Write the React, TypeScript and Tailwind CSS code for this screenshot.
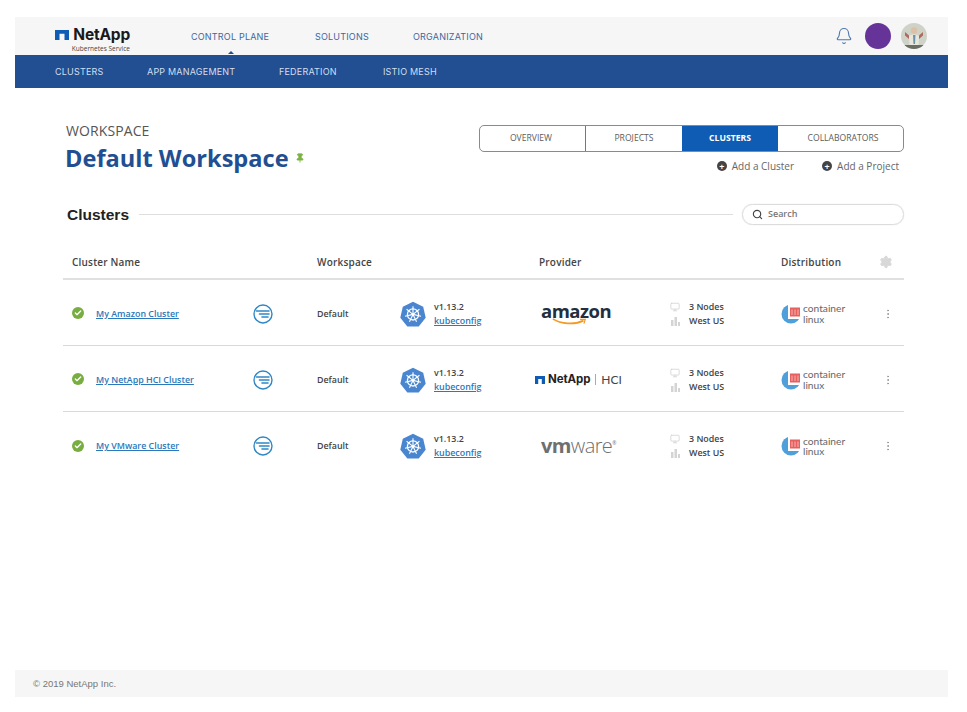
import { Bell, Search, Settings, Check, Monitor, Pin, MoreVertical } from 'lucide-react';

const openSans = 'font-["Open_Sans",sans-serif]';

const topLinks = [
  { label: 'CONTROL PLANE', width: 'w-[124px]', active: true },
  { label: 'SOLUTIONS', width: 'w-[98px]', active: false },
  { label: 'ORGANIZATION', width: 'w-[100px]', active: false },
];

const subLinks = [
  { label: 'CLUSTERS', width: 'w-[92px]' },
  { label: 'APP MANAGEMENT', width: 'w-[132px]' },
  { label: 'FEDERATION', width: 'w-[104px]' },
  { label: 'ISTIO MESH', width: 'w-[80px]' },
];

const tabs = [
  { label: 'OVERVIEW', width: 'w-[106px] pr-[3px]', active: false },
  { label: 'PROJECTS', width: 'w-[96px]', active: false },
  { label: 'CLUSTERS', width: 'w-[96px]', active: true },
  { label: 'COLLABORATORS', width: 'flex-1 pl-[5px]', active: false },
];

const gridCols = 'grid grid-cols-[190px_64px_83px_135px_135px_111px_99px_24px]';

function NetAppMark({ className }: { className: string }) {
  return (
    <svg viewBox="0 0 14 10" className={className} preserveAspectRatio="none">
      <path d="M0 0H14V10H9.5V3.8H4.5V10H0Z" fill="#0f5cb5" />
    </svg>
  );
}

function Logo() {
  return (
    <div className="flex flex-col items-end w-[76px] mt-[7px]">
      <div className="flex items-center h-[15px] gap-[4px]">
        <NetAppMark className="w-[14px] h-[10px]" />
        <span className='font-["Inter",sans-serif] text-[15.5px] font-bold leading-[15px] text-[#1a1a1a] tracking-[-0.2px]'>NetApp</span>
      </div>
      <span className={`${openSans} text-[6.5px] leading-[7px] mt-[3px] text-[#444]`}>Kubernetes Service</span>
    </div>
  );
}

function FilterIcon() {
  return (
    <svg viewBox="0 0 20 20" className="w-[20px] h-[20px]">
      <circle cx="10" cy="10" r="9" fill="none" stroke="#2f86c5" strokeWidth="1.4" />
      <path d="M3.5 7H16M6.5 10H16M9 13H15" stroke="#2f86c5" strokeWidth="1.6" strokeLinecap="round" />
    </svg>
  );
}

function KubeIcon() {
  const spokes = [0, 51.4, 102.8, 154.3, 205.7, 257.1, 308.6];
  return (
    <svg viewBox="0 0 26 26" className="w-[26px] h-[26px]">
      <path d="M13 .8 23.2 5.7 25.7 16.7 18.7 25.5H7.3L.3 16.7 2.8 5.7Z" fill="#4a86d0" />
      <circle cx="13" cy="13.4" r="5.6" fill="none" stroke="#fff" strokeWidth="1.3" />
      <circle cx="13" cy="13.4" r="1.3" fill="#fff" />
      {spokes.map((deg) => (
        <line key={deg} x1="13" y1="13.4" x2="13" y2="5.2" stroke="#fff" strokeWidth="1.1" transform={`rotate(${deg} 13 13.4)`} />
      ))}
    </svg>
  );
}

function ContainerLinux() {
  return (
    <div className="flex items-center">
      <svg viewBox="0 0 20 20" className="w-[20px] h-[20px] shrink-0">
        <circle cx="10" cy="10" r="9.5" fill="#4f9fda" />
        <rect x="7" y="0" width="13" height="15" fill="#fff" />
        <rect x="9" y="3.5" width="10" height="9" fill="#e4615f" />
        <path d="M10 5.5H18V11H10Z" fill="#f08a88" />
        <path d="M12.5 5V11.5M15.5 5V11.5" stroke="#e4615f" strokeWidth="1" />
      </svg>
      <div className='ml-[2px] font-["Lato",sans-serif] font-normal text-[10.2px] leading-[10.5px] text-[#666]'>
        <div>container</div>
        <div>linux</div>
      </div>
    </div>
  );
}

function AmazonLogo() {
  return (
    <div className="relative w-[70px] h-[26px] ml-[6px]">
      <span className='font-["Open_Sans",sans-serif] text-[18.5px] font-bold leading-[20px] tracking-[-0.5px] text-[#232f3e]'>amazon</span>
      <svg viewBox="0 0 40 8" className="absolute left-[11px] top-[17px] w-[35px] h-[7px]">
        <path d="M1 1C10 7 26 8 36 3" fill="none" stroke="#f39a26" strokeWidth="2" />
        <path d="M32 1.5 38 1.5 36.5 6.5" fill="none" stroke="#f39a26" strokeWidth="1.4" />
      </svg>
    </div>
  );
}

function NetAppHci() {
  return (
    <div className="flex items-center">
      <NetAppMark className="w-[10px] h-[8px] mr-[3px]" />
      <span className='font-["Inter",sans-serif] text-[11.5px] font-bold text-[#222] tracking-[-0.1px]'>NetApp</span>
      <span className="w-px h-[11px] bg-[#aaa] mx-[5px]" />
      <span className='font-["Lato",sans-serif] font-normal text-[12px] text-[#444]'>HCI</span>
    </div>
  );
}

function VmwareLogo() {
  return (
    <div className='ml-[6px] font-["Open_Sans",sans-serif] text-[20px] leading-none text-[#6f6f6f] tracking-[-0.6px]'>
      <span className="font-bold">vm</span>
      <span className="font-light">ware</span>
      <span className="text-[5px] font-normal align-super">®</span>
    </div>
  );
}

function BuildingIcon() {
  return (
    <svg viewBox="0 0 10 10" className="w-[10px] h-[10px]">
      <path d="M1 4H3.5V10H1ZM4.5 1H7V10H4.5ZM8 6H10V10H8Z" fill="#d4d4d4" />
    </svg>
  );
}

const clusters = [
  { name: 'My Amazon Cluster', provider: <AmazonLogo /> },
  { name: 'My NetApp HCI Cluster', provider: <NetAppHci /> },
  { name: 'My VMware Cluster', provider: <VmwareLogo /> },
];

function ClusterRow({ cluster, last }: { cluster: (typeof clusters)[0]; last: boolean }) {
  return (
    <div className={`${gridCols} items-center h-[66px] pt-[2px] ${last ? '' : 'border-b border-[#d9d9d9]'} text-[8.9px] font-semibold text-[#444]`}>
      <div className="flex items-center pl-[9px]">
        <span className="w-[12px] h-[12px] rounded-full bg-[#78ae41] flex items-center justify-center">
          <Check className="w-[8px] h-[8px] text-white" strokeWidth={4} />
        </span>
        <a className="ml-[12px] underline text-[#2b78bb]">{cluster.name}</a>
      </div>
      <div>
        <FilterIcon />
      </div>
      <div>Default</div>
      <div className="flex items-center">
        <KubeIcon />
        <div className="ml-[8px] leading-[14px]">
          <div>v1.13.2</div>
          <a className="underline text-[#2b78bb]">kubeconfig</a>
        </div>
      </div>
      <div>{cluster.provider}</div>
      <div className="leading-[14px]">
        <div className="flex items-center">
          <Monitor className="w-[10px] h-[10px] text-[#d4d4d4]" strokeWidth={2} />
          <span className="ml-[9px]">3 Nodes</span>
        </div>
        <div className="flex items-center">
          <BuildingIcon />
          <span className="ml-[9px]">West US</span>
        </div>
      </div>
      <ContainerLinux />
      <div className="flex justify-start pl-[2px]">
        <MoreVertical className="w-[12px] h-[12px] text-[#999]" strokeWidth={2} />
      </div>
    </div>
  );
}

function Avatar() {
  return (
    <svg viewBox="0 0 26 26" className="w-[26px] h-[26px]">
      <clipPath id="avatar-clip">
        <circle cx="13" cy="13" r="13" />
      </clipPath>
      <g clipPath="url(#avatar-clip)">
        <rect width="26" height="26" fill="#cfd2c6" />
        <circle cx="13" cy="7.5" r="3.2" fill="#dcc0a8" />
        <path d="M8 13C10 11 16 11 18 13L17.5 23H8.5Z" fill="#e9e7dc" />
        <path d="M12 12H14.5L14 21H12.5Z" fill="#6b92a8" />
        <path d="M4 9 8 12.5 8 16 4 12.5ZM22 9 18 12.5 18 16 22 12.5Z" fill="#b0695e" />
        <rect y="22" width="26" height="4" fill="#6a6d63" />
      </g>
    </svg>
  );
}

export default function App() {
  return (
    <div className={`${openSans} min-h-[712px] bg-white px-[15px] pt-[17px] pb-[15px] mr-[4px] flex flex-col`}>
      <header className="h-[38px] bg-[#f6f6f6] flex items-center pl-[39px] pr-[21px]">
        <Logo />
        <nav className="flex ml-[61px] h-full items-center pt-[2px]">
          {topLinks.map((l) => (
            <a key={l.label} className={`relative ${l.width} font-["Inter",sans-serif] text-[9px] tracking-[0.2px] text-[#3f669e] whitespace-nowrap`}>
              {l.label}
              {l.active && (
                <span className="absolute left-[37px] top-[21px] w-0 h-0 border-x-[3px] border-x-transparent border-b-[3px] border-b-[#214f91]" />
              )}
            </a>
          ))}
        </nav>
        <div className="ml-auto flex items-center">
          <Bell className="w-[18px] h-[18px] text-[#4f78ad]" strokeWidth={1.5} />
          <span className="ml-[12px] w-[26px] h-[26px] rounded-full bg-[#663399]" />
          <span className="ml-[10px] flex">
            <Avatar />
          </span>
        </div>
      </header>
      <nav className="h-[33px] bg-[#214f91] flex items-center pl-[40px]">
        {subLinks.map((l) => (
          <a key={l.label} className={`${l.width} font-["Inter",sans-serif] text-[9px] tracking-[0.2px] text-[#d3deee] whitespace-nowrap`}>
            {l.label}
          </a>
        ))}
      </nav>

      <main className="flex-1 pl-[48px] pr-[44px]">
        <div className="flex justify-between pl-[3px] pt-[34px]">
          <div>
            <div className="text-[14px] leading-[18px] text-[#555] tracking-[0.1px]">WORKSPACE</div>
            <div className="flex items-center mt-[1px]">
              <h1 className="-ml-[1px] text-[23.6px] leading-[34px] font-bold text-[#214f91] whitespace-nowrap">Default Workspace</h1>
              <Pin className="ml-[6px] w-[10px] h-[10px] text-[#7cb342]" fill="#7cb342" strokeWidth={2} />
            </div>
          </div>
          <div className="w-[425px] pt-[3px]">
            <div className="flex h-[27px] border border-[#8a8a8a] rounded-[5px] overflow-hidden">
              {tabs.map((t, i) => (
                <div
                  key={t.label}
                  className={`${t.width} flex items-center justify-center text-[8.6px] ${
                    t.active ? 'bg-[#0f5cb5] text-white font-bold' : 'text-[#5c5c5c]'
                  } ${i === 0 ? 'border-r border-[#777]' : ''}`}
                >
                  {t.label}
                </div>
              ))}
            </div>
            <div className="flex justify-end gap-[28px] pr-[5px] mt-[7px] text-[10px] leading-[14px] text-[#666]">
              {['Add a Cluster', 'Add a Project'].map((a) => (
                <div key={a} className="flex items-center gap-[5px] whitespace-nowrap">
                  <span className="w-[10px] h-[10px] rounded-full bg-[#444] text-white flex items-center justify-center text-[9px] leading-none font-bold">+</span>
                  {a}
                </div>
              ))}
            </div>
          </div>
        </div>

        <div className="flex items-center h-[20px] mt-[29px]">
          <h2 className='pl-[4px] pt-[2px] font-["Liberation_Sans",sans-serif] text-[15.5px] font-bold text-[#222] whitespace-nowrap'>Clusters</h2>
          <div className="flex-1 h-[1px] bg-[#dedede] mx-[10px]" />
          <div className="w-[162px] h-[21px] border border-[#dcdcdc] rounded-full flex items-center pl-[9px] shadow-[0_0_1px_#ccc] -ml-[1px]">
            <Search className="w-[11px] h-[11px] text-[#444]" strokeWidth={2.5} />
            <span className="ml-[5px] text-[9px] font-semibold text-[#777]">Search</span>
          </div>
        </div>

        <div className={`${gridCols} items-center h-[34px] mt-[22px] border-b-2 border-[#e0e0e0] text-[10px] font-semibold text-[#444] tracking-[0.2px]`}>
          <div className="col-span-2 pl-[9px]">Cluster Name</div>
          <div className="col-span-2">Workspace</div>
          <div className="col-span-2 pl-[4px]">Provider</div>
          <div>Distribution</div>
          <Settings className="w-[14px] h-[14px] -ml-[1px] text-[#d8d8d8]" fill="#d8d8d8" strokeWidth={1.5} />
        </div>
        {clusters.map((c, i) => (
          <ClusterRow key={c.name} cluster={c} last={i === clusters.length - 1} />
        ))}
      </main>

      <footer className='h-[27px] bg-[#f6f6f6] flex items-center pl-[18px] pt-[2px] font-["Liberation_Sans",sans-serif] text-[9.5px] text-[#777]'>
        © 2019 NetApp Inc.
      </footer>
    </div>
  );
}
